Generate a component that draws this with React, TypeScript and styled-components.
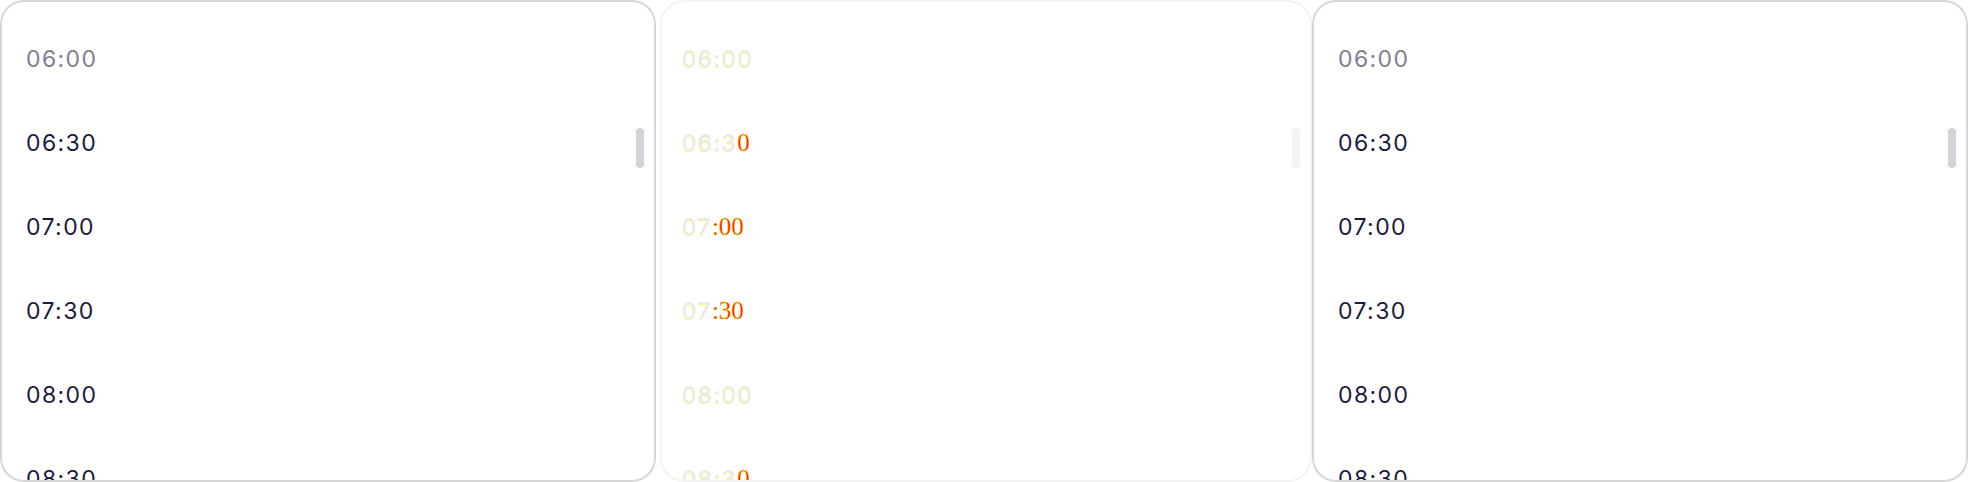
import React from "react";
import styled, { createGlobalStyle } from "styled-components";

const Global = createGlobalStyle`
  html, body { margin: 0; padding: 0; background: #ffffff; }
  body { width: 1968px; height: 482px; overflow: hidden; }
  #root { width: 1968px; height: 482px; }
`;

const Page = styled.div`
  display: grid;
  grid-template-columns: repeat(3, 656px);
  width: 1968px;
  height: 482px;
  background: #ffffff;
`;

const Panel = styled.div<{ $ghost?: boolean }>`
  position: relative;
  box-sizing: border-box;
  height: 482px;
  margin: ${(p) => (p.$ghost ? "0 0 0 4px" : "0")};
  border: 2px solid ${(p) => (p.$ghost ? "#f3f3f3" : "#d6d6d9")};
  border-radius: 24px;
  background: #ffffff;
  overflow: hidden;
`;

const List = styled.div<{ $ghost?: boolean }>`
  display: flex;
  flex-direction: column;
  padding: 15px 0 0 ${(p) => (p.$ghost ? "20px" : "24px")};
`;

const Row = styled.div<{ $muted?: boolean; $ghost?: boolean }>`
  height: 84px;
  display: flex;
  align-items: center;
  font-family: Inter, "Noto Sans", sans-serif;
  font-size: 23px;
  letter-spacing: 1.4px;
  color: ${(p) => (p.$ghost ? "#e9e9e9" : p.$muted ? "#7f7f90" : "#1b1b3b")};
  ${(p) => (p.$ghost ? "text-shadow: -0.6px 0.6px 0 rgba(245, 235, 40, 0.55);" : "")}
`;

const Red = styled.span`
  font-family: "Liberation Serif", serif;
  font-size: 25px;
  letter-spacing: 0;
  color: #ff1a00;
  text-shadow: none;
  -webkit-text-stroke: 0.4px #f7e600;
`;

const Thumb = styled.div<{ $ghost?: boolean }>`
  position: absolute;
  right: 10px;
  top: 126px;
  width: 8px;
  height: 40px;
  border-radius: 4px;
  background: ${(p) => (p.$ghost ? "#f4f4f4" : "#d2d2d8")};
`;

const times = ["06:00", "06:30", "07:00", "07:30", "08:00", "08:30"];

const ghostRows: [string, string][] = [
  ["06:00", ""],
  ["06:3", "0"],
  ["07", ":00"],
  ["07", ":30"],
  ["08:00", ""],
  ["08:3", "0"],
];

function TimeList() {
  return (
    <Panel>
      <List>
        {times.map((t, i) => (
          <Row key={t} $muted={i === 0}>
            {t}
          </Row>
        ))}
      </List>
      <Thumb />
    </Panel>
  );
}

function GhostList() {
  return (
    <Panel $ghost>
      <List $ghost>
        {ghostRows.map(([a, b]) => (
          <Row key={a + b} $ghost>
            {a}
            {b && <Red>{b}</Red>}
          </Row>
        ))}
      </List>
      <Thumb $ghost />
    </Panel>
  );
}

export default function App() {
  return (
    <>
      <Global />
      <Page>
        <TimeList />
        <GhostList />
        <TimeList />
      </Page>
    </>
  );
}
